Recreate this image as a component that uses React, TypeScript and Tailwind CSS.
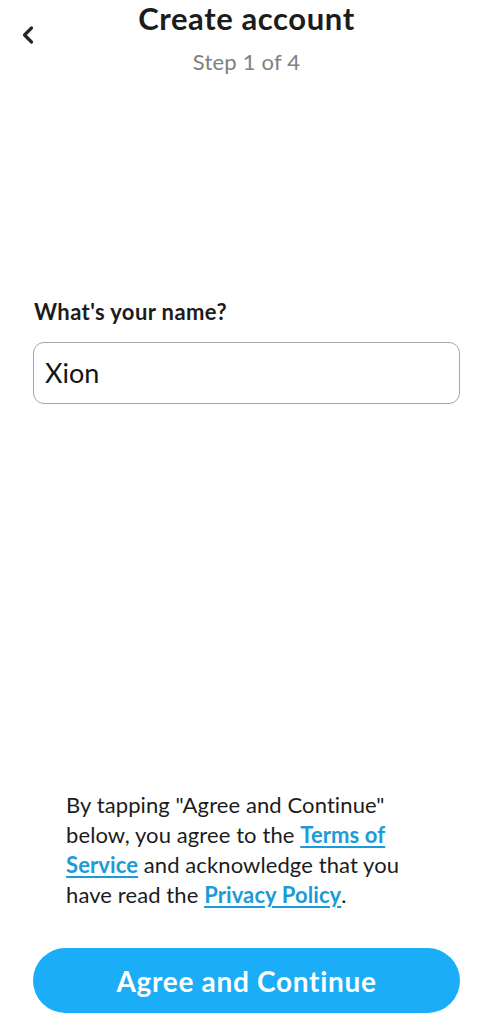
export default function App() {
  return (
    <div
      className="flex h-[1024px] w-full flex-col bg-white text-[#1c1c1c]"
      style={{ fontFamily: "Lato, 'Noto Sans', sans-serif" }}
    >
      {/* Header */}
      <header className="relative text-center">
        <button className="absolute left-[16px] top-[21px] p-1" aria-label="Back">
          <svg width="16" height="20" viewBox="0 0 16 20" fill="none">
            <path d="M11.5 3 L4.5 10 L11.5 17" stroke="#262626" strokeWidth="3.2" strokeLinecap="round" strokeLinejoin="round" />
          </svg>
        </button>
        <h1 className="text-[31px] font-bold leading-[36px] tracking-[0.6px] text-[#1c1c1c]">Create account</h1>
        <p className="mt-[12px] text-[22px] leading-[28px] tracking-[0.2px] text-[#808080]">Step 1 of 4</p>
      </header>

      {/* Name field */}
      <div className="mt-[222px] px-[33px]">
        <label className="block pl-[1px] text-[22px] font-bold leading-[28px] tracking-[0.4px] text-[#1c1c1c]">
          What's your name?
        </label>
        <div className="mt-[16px] flex h-[62px] items-center rounded-[11px] border border-[#a6a6a6] px-[11px]">
          <span className="text-[27px] leading-[32px] text-[#141414]">Xion</span>
        </div>
      </div>

      {/* Footer */}
      <div className="mt-auto px-[33px] pb-[11px]">
        <p className="px-[33px] text-[22px] leading-[30px] tracking-[0.1px] text-[#1c1c1c]">
          By tapping "Agree and Continue" below, you agree to the{" "}
          <a className="font-bold text-[#1d9bd6] underline underline-offset-[3px]">Terms of Service</a> and acknowledge
          that you have read the <a className="font-bold text-[#1d9bd6] underline underline-offset-[3px]">Privacy Policy</a>.
        </p>
        <button className="mt-[38px] flex h-[65px] w-full items-center justify-center rounded-full bg-[#1badf7] text-[28px] font-bold tracking-[0.7px] text-white">
          Agree and Continue
        </button>
      </div>
    </div>
  );
}
